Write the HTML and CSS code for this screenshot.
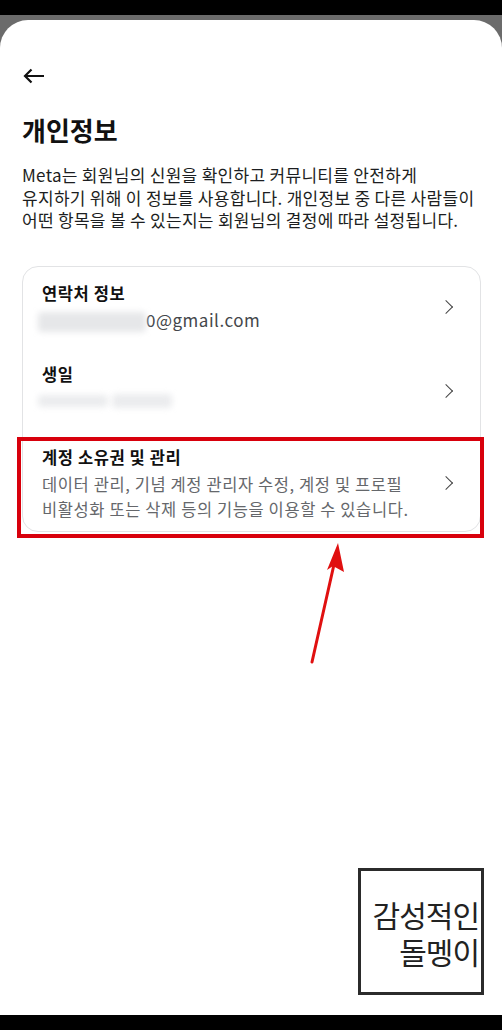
FILE: index.html
```html
<html>
<head>
    <title>개인정보</title>
    <link rel="stylesheet" href="styles.css">
</head>
<body>
<div class="status-bar"></div>
<div class="scrim">
    <div class="sheet">
        <div class="back">
            <svg width="22" height="16" viewBox="0 0 22 16">
                <path d="M21 8H2M8.5 1.5L2 8l6.5 6.5" fill="none" stroke="#111" stroke-width="2.2"/>
            </svg>
        </div>
        <h1 class="title">개인정보</h1>
        <p class="intro">Meta는 회원님의 신원을 확인하고 커뮤니티를 안전하게<br>유지하기 위해 이 정보를 사용합니다. 개인정보 중 다른 사람들이<br>어떤 항목을 볼 수 있는지는 회원님의 결정에 따라 설정됩니다.</p>

        <div class="card">
            <div class="row row-contact">
                <div class="row-text">
                    <div class="row-title">연락처 정보</div>
                    <div class="row-sub"><span class="blur blur-mail"></span>0@gmail.com</div>
                </div>
                <span class="chevron"></span>
            </div>
            <div class="row row-birth">
                <div class="row-text">
                    <div class="row-title">생일</div>
                    <div class="row-sub"><span class="blur blur-birth"></span><span class="blur blur-birth2"></span></div>
                </div>
                <span class="chevron"></span>
            </div>
            <div class="row row-account">
                <div class="row-text">
                    <div class="row-title">계정 소유권 및 관리</div>
                    <div class="row-sub">데이터 관리, 기념 계정 관리자 수정, 계정 및 프로필<br>비활성화 또는 삭제 등의 기능을 이용할 수 있습니다.</div>
                </div>
                <span class="chevron"></span>
            </div>
        </div>

        <div class="highlight"></div>
        <svg class="pointer" width="60" height="130" viewBox="0 0 60 130">
            <path d="M13 120L36 18" stroke="#e01010" stroke-width="3" stroke-linecap="round"/>
            <path d="M39 1L28 28L34 24L45 30Z" fill="#e01010"/>
        </svg>

        <div class="stamp">
            <span>감성적인</span>
            <span>돌멩이</span>
        </div>
    </div>
</div>
<div class="nav-bar"></div>
</body>
</html>
```

FILE: styles.css
```css
body {
    margin: 0;
    background: #000;
    font-family: "Noto Sans CJK KR", "Noto Sans", sans-serif;
    color: #1c1e21;
}

.status-bar {
    height: 15px;
    background: #000;
}

.nav-bar {
    height: 15px;
    background: #000;
}

.scrim {
    background: #6b6b6b;
    padding-top: 5px;
}

.sheet {
    position: relative;
    height: 995px;
    background: #fff;
    border-radius: 28px 28px 0 0;
    padding: 0 21px 0 22px;
    box-sizing: border-box;
    overflow: hidden;
}

.back {
    padding-top: 48px;
    height: 16px;
    padding-left: 1px;
}

.title {
    margin: 28px 0 0;
    font-size: 26px;
    font-weight: 700;
    line-height: 36px;
    color: #111;
}

.intro {
    margin: 16px 0 0;
    font-size: 17px;
    line-height: 22.5px;
    color: #1c1e21;
    letter-spacing: 0.3px;
    white-space: nowrap;
}

.card {
    margin-top: 34px;
    border: 1px solid #e2e3e5;
    border-radius: 16px;
    height: 266px;
    box-sizing: border-box;
    padding-top: 13px;
}

.row {
    display: flex;
    align-items: center;
    padding: 0 29px 0 19px;
}

.row-text {
    flex: 1;
}

.row-title {
    font-size: 16.5px;
    font-weight: 700;
    line-height: 26px;
    color: #111;
    letter-spacing: 0.6px;
}

.row-sub {
    font-size: 17px;
    line-height: 25px;
    color: #5f6368;
    letter-spacing: 0.5px;
    white-space: nowrap;
}

.row-contact .row-sub {
    color: #44474b;
    height: 28px;
    line-height: 28px;
}

.row-birth {
    margin-top: 27px;
}

.row-birth .row-sub {
    height: 28px;
    line-height: 28px;
    padding-top: 7px;
}

.row-account {
    margin-top: 22px;
}

.row-account .row-sub {
    margin-top: 2px;
    font-size: 16.5px;
    color: #65676b;
    letter-spacing: 0.6px;
}

.blur {
    display: inline-block;
    vertical-align: middle;
    background: #e6e7e9;
    filter: blur(3px);
    border-radius: 4px;
}

.blur-mail {
    width: 108px;
    height: 20px;
    margin-left: -4px;
}

.blur-birth {
    width: 70px;
    height: 12px;
    margin-left: -4px;
    background: #ebecee;
}

.blur-birth2 {
    width: 60px;
    height: 14px;
    margin-left: 4px;
    background: #ebecee;
}

.chevron {
    width: 9px;
    height: 9px;
    border-top: 1.6px solid #444;
    border-right: 1.6px solid #444;
    transform: rotate(45deg);
    margin-left: 10px;
}

.highlight {
    position: absolute;
    left: 17px;
    top: 417px;
    width: 459px;
    height: 93px;
    border: 4px solid #d8000c;
}

.pointer {
    position: absolute;
    left: 299px;
    top: 522px;
}

.stamp {
    position: absolute;
    left: 358px;
    top: 848px;
    width: 118px;
    height: 118px;
    border: 3px solid #2b2b2b;
    display: flex;
    flex-direction: column;
    align-items: flex-end;
    justify-content: center;
    padding-right: 2px;
    padding-top: 3px;
    box-sizing: content-box;
    font-size: 30px;
    font-weight: 400;
    line-height: 37px;
    color: #222;
    letter-spacing: -1px;
}
```
